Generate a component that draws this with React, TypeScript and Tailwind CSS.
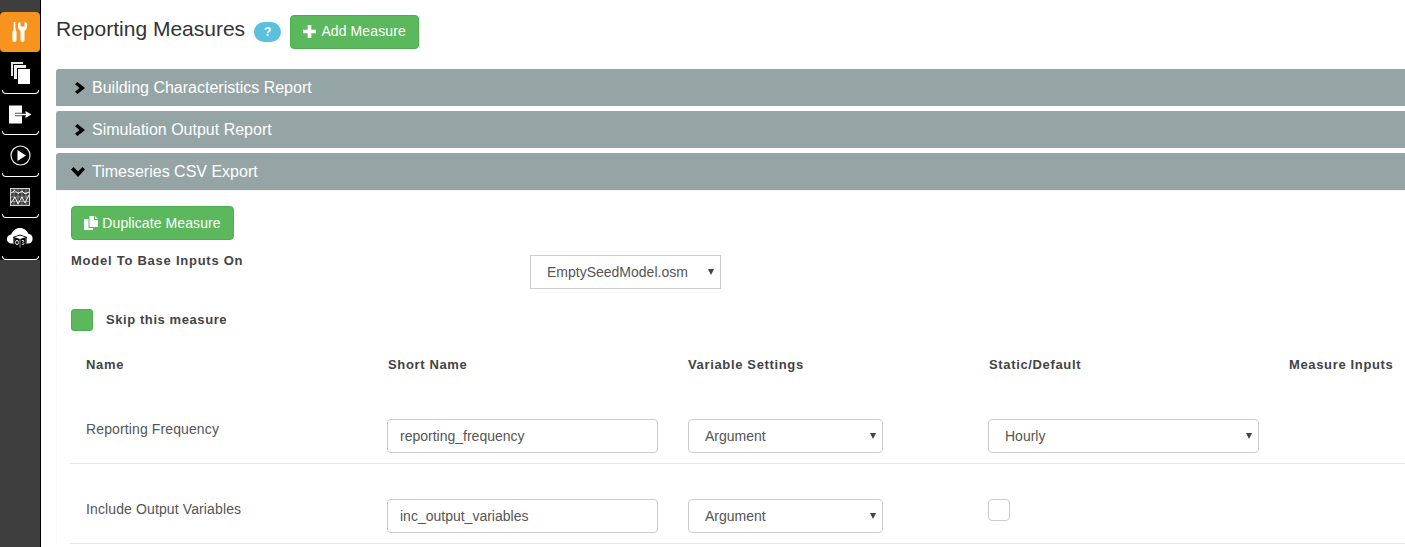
import type { ReactNode } from 'react'

const font = "font-['Liberation_Sans',Arial,sans-serif]"

function NavDivider() {
  return <div className="absolute bottom-0 left-[2px] right-[1px] h-[4px] rounded-b-[4px] border-b border-x border-white" />
}

function WrenchIcon() {
  return (
    <svg width="16" height="20" viewBox="0 0 16 20" fill="white">
      <path d="M1.700 0h1.600l.3 8.500.9 1V18a2 2 0 0 1-2 2h-.1a2 2 0 0 1-2-2V9.500l.9-1z" />
      <path d="M6 1l2.500-1v4.500h4V0L15 1v4c0 2-1 3-2.500 3.700V18a2 2 0 0 1-4 0V8.700C7 8 6 7 6 5z" />
    </svg>
  )
}

function CopyIcon() {
  return (
    <svg width="21" height="24" viewBox="0 0 21 24" stroke="black" strokeWidth="1" className="mt-[2px]">
      <rect x="0.500" y="0.500" width="13" height="15" fill="#e4e4e4" />
      <rect x="3.500" y="3.500" width="13" height="15" fill="#efefef" />
      <rect x="7.500" y="7.500" width="13" height="16" fill="white" />
    </svg>
  )
}

function ExportIcon() {
  return (
    <svg width="24" height="19" viewBox="0 0 24 19" fill="white" className="mt-[1px]">
      <rect x="1" y="0.500" width="13" height="18" />
      <path d="M7 7.800h10V8.800H7zM7 10.200h10v1H7z" fill="#555" />
      <path d="M14 8.700h3.500V6l6 3.500-6 3.500v-2.700H14z" />
      <path d="M14 8.500h4v2h-4z" fill="black" />
      <path d="M14 9h4v1h-4z" fill="white" />
    </svg>
  )
}

function PlayIcon() {
  return (
    <svg width="21" height="21" viewBox="0 0 21 21" fill="none">
      <circle cx="10.500" cy="10.500" r="9.500" stroke="#e8e8e8" strokeWidth="1.200" />
      <path d="M7.500 5l8.500 5.500L7.500 16z" fill="white" />
    </svg>
  )
}

function ChartIcon() {
  return (
    <svg width="20" height="18" viewBox="0 0 20 18" fill="none" stroke="#d0d0d0" strokeWidth="0.900">
      <rect x="0.500" y="0.500" width="19" height="17" strokeWidth="1.200" fill="#3a3a3a" />
      <path d="M0 4.500h20M0 9h20M0 13.500h20M4 0v18M8 0v18M12 0v18M16 0v18" strokeOpacity="0.550" />
      <path d="M1 5l4-2.500 3 3 4-2.500 3 3 4-2M1 15l4-6 3 7 4-7 3 6 4-8" stroke="white" />
    </svg>
  )
}

function CloudIcon() {
  return (
    <svg width="26" height="20" viewBox="0 0 26 20">
      <path d="M4.500 15.500a4.500 4.500 0 0 1-.3-9C5.500 2.700 9 0 13 0c3.800 0 7 2.400 8.300 5.800a4.900 4.900 0 0 1 .2 9.700z" fill="white" />
      <path d="M6 9L13 6.500 20 9v7.500L13 20l-7-3.500z" fill="black" />
      <path d="M7.500 9.300L13 7.500l5.500 1.800L13 11z" fill="white" />
      <path d="M13 11v8.500M6.800 9.800v6.400M19.200 9.800v6.400" stroke="white" strokeWidth="0.600" fill="none" />
      <ellipse cx="10" cy="14.500" rx="1.400" ry="2.200" fill="none" stroke="white" strokeWidth="0.900" />
      <path d="M14.800 12.500h1.800l.3.800-1 1.100 1 1.100-.3.800h-1.800" fill="none" stroke="white" strokeWidth="0.900" />
    </svg>
  )
}

function Sidebar() {
  return (
    <aside className="w-[41px] shrink-0 self-stretch bg-[#3e3e3e] border-r border-black pt-[12px]">
      <div className="bg-black">
        <div className="h-[40px] rounded-[4px] bg-[#f7941d] flex items-center justify-center">
          <WrenchIcon />
        </div>
        {[<CopyIcon />, <ExportIcon />, <PlayIcon />, <ChartIcon />, <CloudIcon />].map((icon, i) => (
          <div key={i} className="relative h-[41.500px] flex items-center justify-center pb-[1px]">
            {icon}
            <NavDivider />
          </div>
        ))}
      </div>
    </aside>
  )
}

function AccordionBar({ title, open }: { title: string; open?: boolean }) {
  return (
    <div className="h-[37px] -mr-[6px] bg-[#95a5a5] rounded-t-[3px] flex items-center text-white text-[16px] mb-[5px]">
      <div className="w-[36px] flex justify-end pr-[5px]">
        {open ? (
          <svg width="14" height="10" viewBox="0 0 14 10" fill="black" className="mr-[2px]">
            <path d="M0 2.500L2.500 0 7 4.500 11.500 0 14 2.500 7 10z" />
          </svg>
        ) : (
          <svg width="10" height="12" viewBox="0 0 10 12" fill="black" className="mr-[2px]">
            <path d="M2.500 0L10 6l-7.500 6L0 9.700 4.500 6 0 2.300z" />
          </svg>
        )}
      </div>
      {title}
    </div>
  )
}

function FakeSelect({ value, className }: { value: string; className: string }) {
  return (
    <div className={`h-[34px] border border-[#ccc] flex items-center justify-between pl-[16px] pr-[6px] text-[14px] text-[#555] bg-white ${className}`}>
      <span>{value}</span>
      <svg width="6" height="6" viewBox="0 0 6 6" className="mb-[1px]">
        <path d="M0 0h6L3 6z" fill="#444" />
      </svg>
    </div>
  )
}

function TextBox({ value }: { value: string }) {
  return (
    <div className="h-[34px] w-[271px] border border-[#ccc] rounded-[4px] flex items-center pl-[12px] text-[14px] text-[#555] bg-white">
      {value}
    </div>
  )
}

function ArgRow({ name, shortName, last }: { name: string; shortName: string; last: ReactNode }) {
  return (
    <div className="grid grid-cols-[301px_301px_300px_1fr] h-[80px] -ml-[1px] border-b border-[#e7e7e7] pl-[16px] text-[14px] text-[#555]">
      <div className="pt-[35px] tracking-[0.120px]">{name}</div>
      <div className="pt-[35px]"><TextBox value={shortName} /></div>
      <div className="pt-[35px]"><FakeSelect value="Argument" className="w-[195px] rounded-[4px]" /></div>
      <div className="pt-[35px]">{last}</div>
    </div>
  )
}

export default function App() {
  const headers = ['Name', 'Short Name', 'Variable Settings', 'Static/Default', 'Measure Inputs']
  return (
    <div className={`${font} flex h-[547px] w-[1405px] overflow-hidden bg-white text-[#333]`}>
      <Sidebar />
      <main className="flex-1 pl-[15px] min-w-0">
        <div className="flex items-center h-[69px] pb-[6px]">
          <h1 className="text-[21px] leading-none mb-[6px]">Reporting Measures</h1>
          <span className="ml-[9px] w-[27px] h-[20px] rounded-full bg-[#5bc0de] text-white text-[12px] font-bold flex items-center justify-center">?</span>
          <button className="ml-[9px] h-[34px] w-[129px] rounded-[4px] bg-[#5cb85c] border border-[#4cae4c] text-white text-[14px] tracking-[0.100px] flex items-center justify-center gap-[5px]">
            <svg width="13" height="13" viewBox="0 0 13 13" fill="white">
              <path d="M4.700 0h3.600v4.700H13v3.600H8.300V13H4.700V8.300H0V4.700h4.700z" />
            </svg>
            Add Measure
          </button>
        </div>

        <AccordionBar title="Building Characteristics Report" />
        <AccordionBar title="Simulation Output Report" />
        <AccordionBar title="Timeseries CSV Export" open />

        <div className="pl-[14px] -mt-[5px] pt-[15px] border-l border-t border-[#f8f8f8]">
          <button className="h-[34px] w-[163px] rounded-[4px] bg-[#5cb85c] border border-[#4cae4c] text-white text-[14px] tracking-[0.100px] flex items-center justify-center gap-[3px]">
            <svg width="15" height="14" viewBox="0 0 15 14" fill="white">
              <path d="M5.500 0H10v4h4v7H5.500z" />
              <path d="M11 0l3 3h-3z" />
              <path d="M0 3h4.500v9H9v2H0z" />
            </svg>
            Duplicate Measure
          </button>

          <div className="relative h-[50px]">
            <label className="absolute left-0 top-[11px] text-[13px] font-bold tracking-[0.750px] text-[#444]">Model To Base Inputs On</label>
            <div className="absolute left-[459px] top-[15px]">
              <FakeSelect value="EmptySeedModel.osm" className="w-[191px]" />
            </div>
          </div>

          <div className="flex items-center h-[22px] mt-[19px]">
            <span className="w-[22px] h-[22px] rounded-[3px] bg-[#5cb85c] border border-[#4cae4c]" />
            <span className="ml-[13px] text-[13px] font-bold tracking-[0.580px] text-[#444]">Skip this measure</span>
          </div>

          <div className="grid grid-cols-[302px_300px_301px_300px_1fr] pl-[15px] mt-[24px] h-[20px] items-center text-[13px] font-bold tracking-[0.650px] whitespace-nowrap text-[#444]">
            {headers.map((h) => <div key={h}>{h}</div>)}
          </div>

          <div className="mt-[9px]">
            <ArgRow
              name="Reporting Frequency"
              shortName="reporting_frequency"
              last={<FakeSelect value="Hourly" className="w-[271px] rounded-[4px]" />}
            />
            <ArgRow
              name="Include Output Variables"
              shortName="inc_output_variables"
              last={<div className="w-[22px] h-[22px] rounded-[4px] border border-[#ccc]" />}
            />
          </div>
        </div>
      </main>
    </div>
  )
}
